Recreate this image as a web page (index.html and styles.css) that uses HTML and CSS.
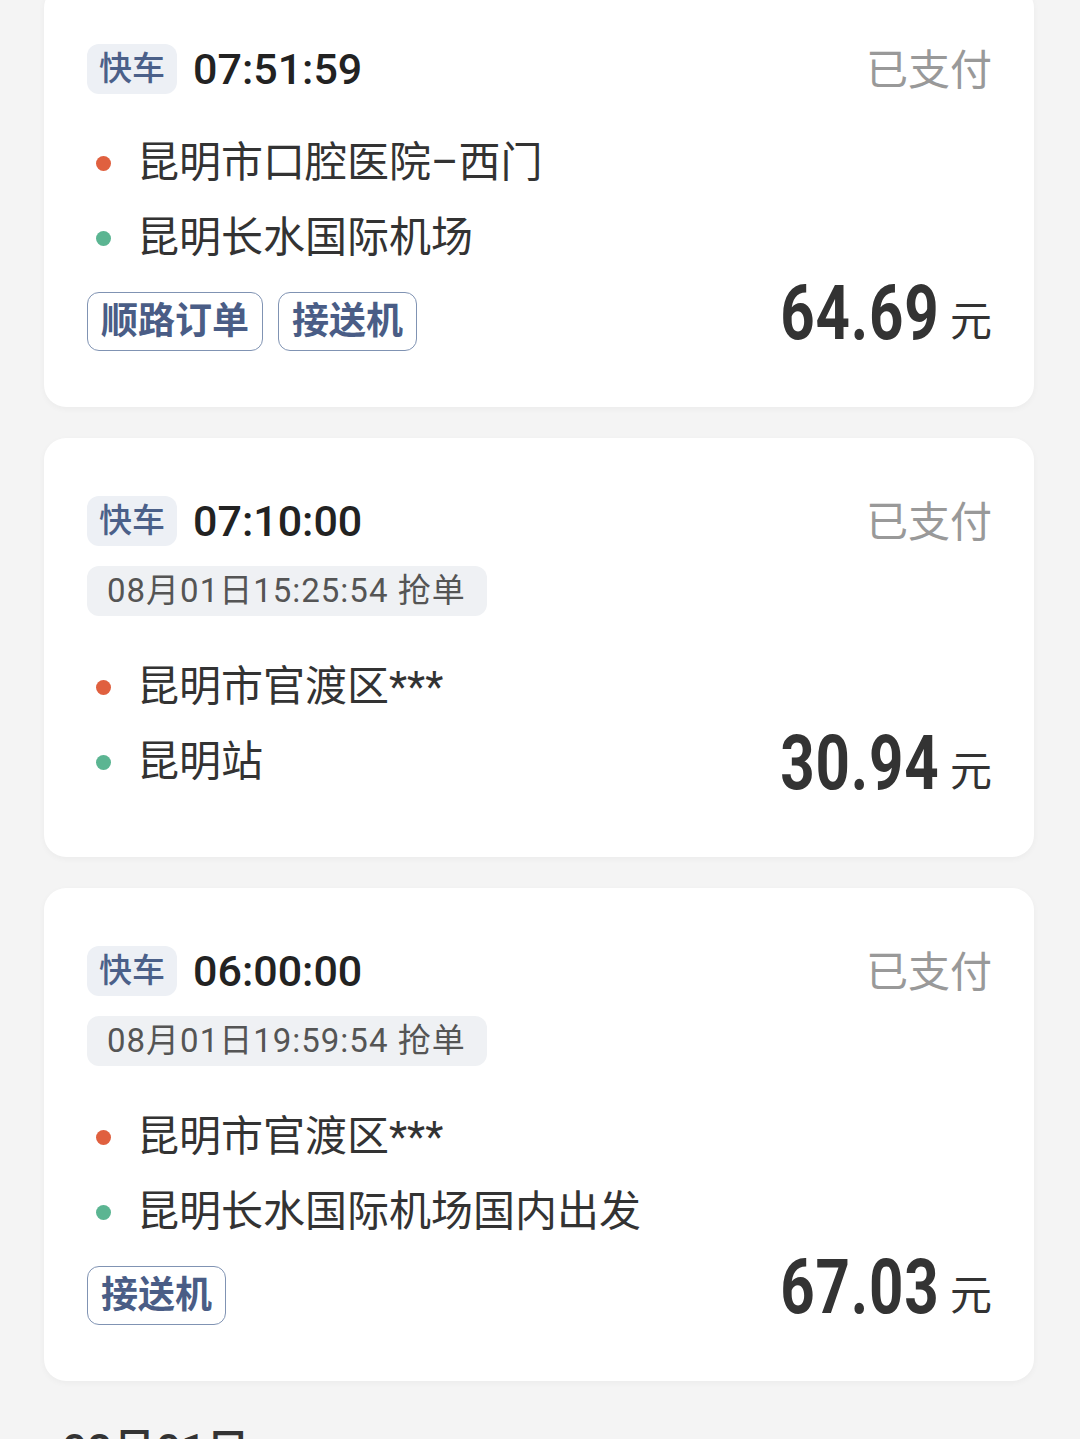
FILE: index.html
```html
<!DOCTYPE html>
<html lang="zh-CN">
<head>
    <meta charset="UTF-8">
    <meta name="viewport" content="width=device-width, initial-scale=1.0">
    <title>订单列表</title>
    <link rel="stylesheet" href="styles.css">
</head>
<body>
    <div class="order-list">
        <div class="order-card">
            <div class="order-head">
                <span class="car-type">快车</span>
                <span class="order-time">07:51:59</span>
                <span class="order-status">已支付</span>
            </div>
            <div class="order-body">
                <div class="order-left">
                    <ul class="route">
                        <li class="start">昆明市口腔医院–西门</li>
                        <li class="end">昆明长水国际机场</li>
                    </ul>
                    <div class="tags">
                        <span class="tag">顺路订单</span>
                        <span class="tag">接送机</span>
                    </div>
                </div>
                <div class="price"><span class="num">64.69</span><span class="unit">元</span></div>
            </div>
        </div>

        <div class="order-card">
            <div class="order-head">
                <span class="car-type">快车</span>
                <span class="order-time">07:10:00</span>
                <span class="order-status">已支付</span>
            </div>
            <div class="grab-time">08月01日15:25:54 抢单</div>
            <div class="order-body">
                <div class="order-left">
                    <ul class="route">
                        <li class="start">昆明市官渡区***</li>
                        <li class="end">昆明站</li>
                    </ul>
                </div>
                <div class="price"><span class="num">30.94</span><span class="unit">元</span></div>
            </div>
        </div>

        <div class="order-card">
            <div class="order-head">
                <span class="car-type">快车</span>
                <span class="order-time">06:00:00</span>
                <span class="order-status">已支付</span>
            </div>
            <div class="grab-time">08月01日19:59:54 抢单</div>
            <div class="order-body">
                <div class="order-left">
                    <ul class="route">
                        <li class="start">昆明市官渡区***</li>
                        <li class="end">昆明长水国际机场国内出发</li>
                    </ul>
                    <div class="tags">
                        <span class="tag">接送机</span>
                    </div>
                </div>
                <div class="price"><span class="num">67.03</span><span class="unit">元</span></div>
            </div>
        </div>

        <div class="day-title">08月01日</div>
    </div>
</body>
</html>
```

FILE: styles.css
```css
body {
    margin: 0;
    padding: 0;
    background-color: #f4f4f4;
    font-family: Roboto, "Noto Sans CJK SC", sans-serif;
    color: #333;
    overflow: hidden;
}
.order-list {
    margin-top: -14px;
    padding: 0 46px 0 44px;
    display: flex;
    flex-direction: column;
    gap: 31px;
}
.order-card {
    background: #fff;
    border-radius: 22px;
    padding: 58px 44px 56px 43px;
    box-shadow: 0 2px 6px rgba(0, 0, 0, 0.04);
}
.order-head {
    display: flex;
    align-items: center;
    height: 50px;
}
.car-type {
    background: #edf0f5;
    color: #4b6089;
    font-size: 33px;
    font-weight: 500;
    line-height: 50px;
    padding: 0 12px;
    border-radius: 12px;
}
.order-time {
    margin-left: 16px;
    font-size: 43px;
    font-weight: 500;
    color: #222;
}
.order-status {
    margin-left: auto;
    margin-top: -6px;
    margin-right: -2px;
    font-size: 42px;
    color: #999;
}
.grab-time {
    align-self: flex-start;
    display: inline-block;
    margin-top: 20px;
    margin-bottom: 2px;
    background: #eff1f4;
    color: #555;
    font-size: 33px;
    letter-spacing: 1px;
    line-height: 50px;
    padding: 0 21px 0 20px;
    border-radius: 12px;
}
.order-body {
    display: flex;
    justify-content: space-between;
    align-items: flex-end;
    margin-top: 31px;
}
.route {
    list-style: none;
    margin: 0;
    padding: 0;
}
.route li {
    position: relative;
    font-size: 42px;
    line-height: 75px;
    padding-left: 50px;
    color: #333;
}
.route li::before {
    content: "";
    position: absolute;
    left: 9px;
    top: 31px;
    width: 15px;
    height: 15px;
    border-radius: 50%;
}
.route .start::before {
    background: #e0603f;
}
.route .end::before {
    background: #5bb592;
}
.order-left > .route:last-child {
    margin-bottom: 2px;
}
.tags {
    display: flex;
    gap: 15px;
    margin-top: 17px;
}
.tag {
    border: 1.5px solid #8093b3;
    border-radius: 12px;
    color: #4a5d86;
    font-size: 37px;
    font-weight: bold;
    line-height: 57px;
    padding: 0 13px;
}
.price {
    display: flex;
    align-items: baseline;
    color: #333;
    line-height: 60px;
    margin-right: -2px;
}
.price .num {
    display: inline-block;
    font-family: Roboto, sans-serif;
    font-weight: bold;
    font-size: 76px;
    letter-spacing: 1px;
    transform: scaleX(0.79);
    transform-origin: right center;
}
.price .unit {
    display: inline-block;
    font-family: "Noto Sans CJK SC", sans-serif;
    font-size: 42px;
    margin-left: 11px;
    transform: translateY(-3px);
}
.day-title {
    margin-top: 3px;
    padding-left: 18px;
    font-size: 44px;
    font-weight: 500;
    color: #333;
}
```
